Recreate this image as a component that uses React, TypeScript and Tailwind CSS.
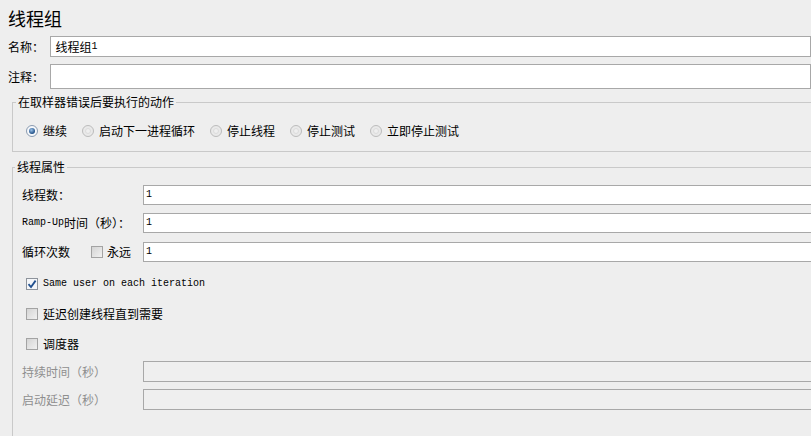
import React from "react";

const mono = "font-['Liberation_Mono',monospace] text-[10px]";

function Radio({ label, checked }: { label: string; checked?: boolean }) {
  return (
    <div className="flex items-center gap-[5px]">
      <span
        className={
          checked
            ? "flex h-[12px] w-[12px] items-center justify-center rounded-full border border-[#8a9bb0] bg-[#f6f8fb]"
            : "flex h-[12px] w-[12px] items-center justify-center rounded-full border border-[#bcbcbc] bg-[#e9e9e9]"
        }
      >
        {checked ? (
          <span className="h-[6px] w-[6px] rounded-full bg-[radial-gradient(circle_at_40%_35%,#9cc3ea,#1f4f86_70%)]" />
        ) : (
          <span className="h-[6px] w-[6px] rounded-full border border-[#dcdcdc] bg-[#efefef]" />
        )}
      </span>
      <span>{label}</span>
    </div>
  );
}

function Check({ checked }: { checked?: boolean }) {
  return (
    <span
      className={
        checked
          ? "flex h-[12px] w-[12px] items-center justify-center border border-[#8d939b] bg-[#f4f6f9]"
          : "flex h-[12px] w-[12px] items-center justify-center border border-[#a3a3a3] bg-[linear-gradient(135deg,#d4d4d4,#f1f1f1)]"
      }
    >
      {checked && (
        <svg width="10" height="10" viewBox="0 0 10 10">
          <path d="M1.5 5.2 L4 8 L8.6 1.6" fill="none" stroke="#21508f" strokeWidth="1.8" />
        </svg>
      )}
    </span>
  );
}

function FieldRow({ label, value, disabled, className }: { label: React.ReactNode; value?: string; disabled?: boolean; className?: string }) {
  return (
    <div className={`flex items-center ${className ?? ""}`}>
      <div className={`flex w-[130px] items-center pl-[9px] ${disabled ? "text-[#8e8e8e]" : ""}`}>{label}</div>
      <div
        className={`flex h-full w-[700px] items-center border border-[#a8a8a8] pl-[2px] ${
          disabled ? "bg-[#efefef]" : "bg-white"
        }`}
      >
        {value && <span className={mono}>{value}</span>}
      </div>
    </div>
  );
}

export default function App() {
  return (
    <div className="h-[436px] w-[811px] overflow-hidden bg-[#eeeeee] font-['Noto_Sans_CJK_SC','Microsoft_YaHei',sans-serif] text-[12px] leading-none text-black">
      {/* header */}
      <div className="h-[36px] pl-[8px] pt-[7px] text-[18px] leading-[22px]">线程组</div>

      <div className="flex h-[21px] items-center">
        <span className="w-[51px] pl-[8px]">名称：</span>
        <div className="flex h-full w-[770px] items-center border border-[#a8a8a8] bg-white pl-[4px]">
          线程组<span className={mono}>1</span>
        </div>
      </div>
      <div className="mt-[7px] flex h-[25px] items-center">
        <span className="w-[51px] pl-[8px]">注释：</span>
        <div className="h-full w-[770px] border border-[#a8a8a8] bg-white" />
      </div>

      {/* sampler error action */}
      <fieldset className="ml-[12px] mt-[5px] w-[820px] border border-[#c9c9c9] pb-[10px]">
        <legend className="ml-[3px] h-[16px] px-[2px] leading-[16px]">在取样器错误后要执行的动作</legend>
        <div className="mt-[11px] flex h-[20px] items-center gap-[15px] pl-[13px]">
          <Radio label="继续" checked />
          <Radio label="启动下一进程循环" />
          <Radio label="停止线程" />
          <Radio label="停止测试" />
          <Radio label="立即停止测试" />
        </div>
      </fieldset>

      {/* thread properties */}
      <fieldset className="ml-[12px] mt-[7px] h-[300px] w-[820px] border border-[#c9c9c9]">
        <legend className="ml-[2px] h-[16px] px-[2px] leading-[16px]">线程属性</legend>
        <FieldRow className="mt-[10px] h-[20px]" label="线程数：" value="1" />
        <FieldRow
          className="mt-[8px] h-[20px]"
          label={
            <>
              <span className={mono}>Ramp-Up</span>时间（秒）：
            </>
          }
          value="1"
        />
        <FieldRow
          className="mt-[9px] h-[20px]"
          label={
            <>
              <span className="w-[69px]">循环次数</span>
              <Check />
              <span className="ml-[4px]">永远</span>
            </>
          }
          value="1"
        />
        <div className="mt-[12px] flex h-[20px] items-center gap-[5px] pl-[13px]">
          <Check checked />
          <span className={mono}>Same user on each iteration</span>
        </div>
        <div className="mt-[10px] flex h-[20px] items-center gap-[5px] pl-[13px]">
          <Check />
          <span>延迟创建线程直到需要</span>
        </div>
        <div className="mt-[10px] flex h-[20px] items-center gap-[5px] pl-[13px]">
          <Check />
          <span>调度器</span>
        </div>
        <FieldRow className="mt-[7px] h-[21px]" label="持续时间（秒）" disabled />
        <FieldRow className="mt-[7px] h-[21px]" label="启动延迟（秒）" disabled />
      </fieldset>
    </div>
  );
}
